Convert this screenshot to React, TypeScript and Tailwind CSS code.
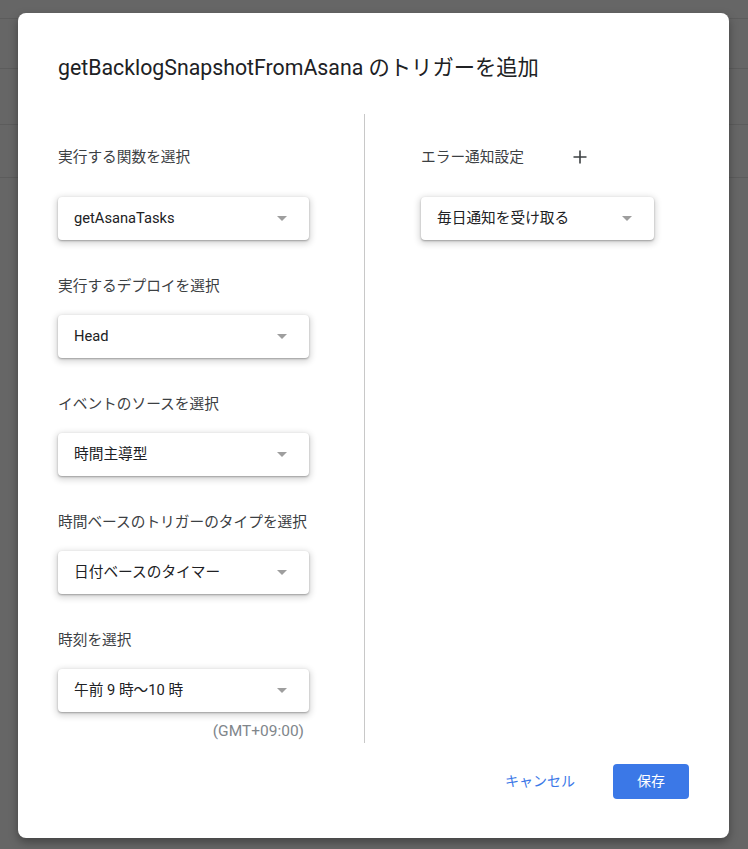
const font = { fontFamily: 'Roboto, "Noto Sans CJK JP", sans-serif' };

function Select({ value, width }: { value: string; width: string }) {
  return (
    <div
      className={`flex h-[43px] ${width} items-center justify-between rounded-[4px] bg-white pl-4 pr-[22px] shadow-[0_1px_2px_rgba(0,0,0,0.3),0_2px_6px_2px_rgba(0,0,0,0.15)]`}
    >
      <span className="text-[14.7px] text-[#202124]">{value}</span>
      <span className="h-0 w-0 border-x-[5px] border-t-[5px] border-x-transparent border-t-[#9e9e9e]" />
    </div>
  );
}

function Field({ label, value, first }: { label: string; value: string; first?: boolean }) {
  return (
    <div>
      <div className="h-5 text-[14.7px] leading-5 text-[#3c4043]">{label}</div>
      <div className={first ? "mt-[30px]" : "mt-[19px]"}>
        <Select value={value} width="w-[251px]" />
      </div>
    </div>
  );
}

export default function App() {
  return (
    <div className="relative h-[849px] w-full overflow-hidden bg-[#666666]" style={font}>
      {/* faint rows of the page behind the dialog */}
      <div className="absolute left-0 right-0 top-[18px] h-px bg-[#5c5c5c]" />
      <div className="absolute left-0 right-0 top-[68px] h-px bg-[#5c5c5c]" />
      <div className="absolute left-0 right-0 top-[124px] h-px bg-[#5c5c5c]" />
      <div className="absolute left-0 right-0 top-[177px] h-px bg-[#5c5c5c]" />

      <div className="relative pl-[18px] pt-[13px]">
        <div className="flex w-[711px] flex-col rounded-[8px] bg-white px-10 pb-[39px] pt-[41px] shadow-[0_4px_10px_rgba(0,0,0,0.35)]">
          <h1 className="h-7 text-[21.3px] leading-7 text-[#202124]">
            getBacklogSnapshotFromAsana のトリガーを追加
          </h1>

          <div className="mt-8 flex">
            {/* left */}
            <div className="flex w-[307px] flex-col border-r border-[#c8c8c8] pb-1 pt-[33px]">
              <div className="flex flex-col gap-9">
                <Field label="実行する関数を選択" value="getAsanaTasks" first />
                <Field label="実行するデプロイを選択" value="Head" />
                <Field label="イベントのソースを選択" value="時間主導型" />
                <Field label="時間ベースのトリガーのタイプを選択" value="日付ベースのタイマー" />
                <Field label="時刻を選択" value="午前 9 時〜10 時" />
              </div>
              <div className="mt-[11px] w-[246px] text-right text-[15.5px] leading-4 text-[#80868b]">
                (GMT+09:00)
              </div>
            </div>

            {/* right */}
            <div className="pl-14 pt-[33px]">
              <div className="flex h-5 items-center text-[14.7px] leading-5 text-[#3c4043]">
                <span>エラー通知設定</span>
                <svg className="ml-[48px]" width="16" height="16" viewBox="0 0 16 16">
                  <path d="M8 1.5v13M1.5 8h13" stroke="#3c4043" strokeWidth="1.6" />
                </svg>
              </div>
              <div className="mt-[30px]">
                <Select value="毎日通知を受け取る" width="w-[233px]" />
              </div>
            </div>
          </div>

          <div className="mt-[21px] flex items-center justify-end">
            <button className="mr-[38px] text-[14px] text-[#3b78e7]">キャンセル</button>
            <button className="h-[35px] w-[76px] rounded-[4px] bg-[#3b78e7] text-[14px] text-white">
              保存
            </button>
          </div>
        </div>
      </div>
    </div>
  );
}
